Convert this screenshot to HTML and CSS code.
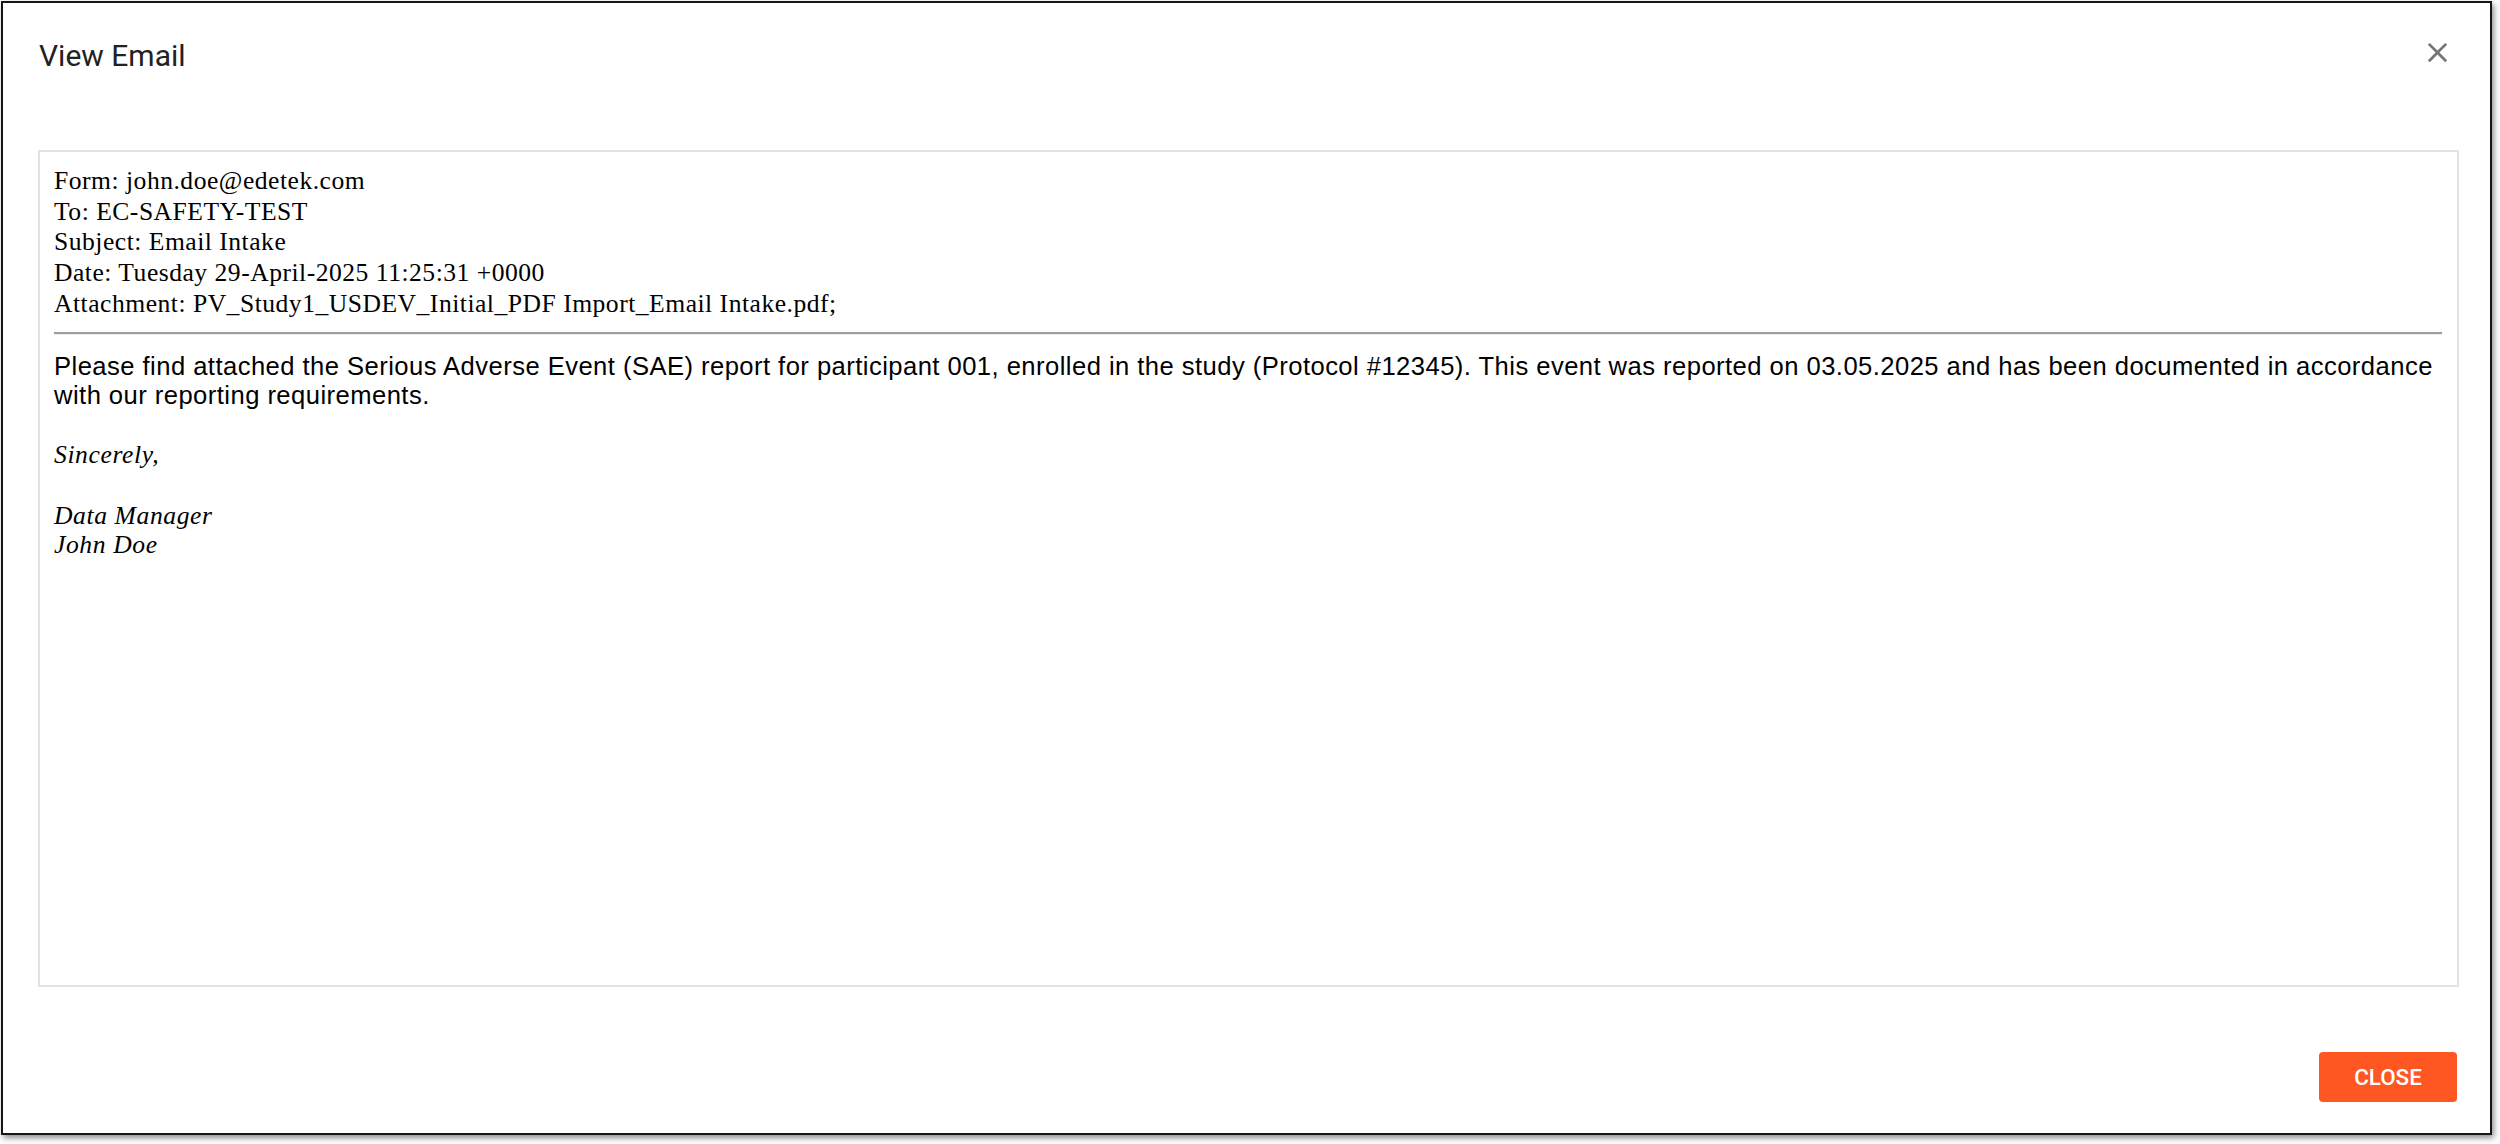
FILE: index.html
```html
<!DOCTYPE html>
<html lang="en">
<head>
<meta charset="utf-8">
<title>View Email</title>
<link rel="stylesheet" href="styles.css">
</head>
<body>
<div class="dialog">
  <div class="dialog-header">
    <h1 class="dialog-title">View Email</h1>
    <button class="icon-btn" aria-label="Close">
      <svg viewBox="0 0 24 24" width="33" height="33"><path fill="#757575" d="M19 6.41L17.59 5 12 10.59 6.41 5 5 6.41 10.59 12 5 17.59 6.41 19 12 13.41 17.59 19 19 17.59 13.41 12z"/></svg>
    </button>
  </div>
  <div class="email-box">
    <div class="email-meta">
      <div>Form: john.doe@edetek.com</div>
      <div>To: EC-SAFETY-TEST</div>
      <div>Subject: Email Intake</div>
      <div>Date: Tuesday 29-April-2025 11:25:31 +0000</div>
      <div>Attachment: PV_Study1_USDEV_Initial_PDF Import_Email Intake.pdf;</div>
    </div>
    <hr class="divider">
    <p class="email-text">Please find attached the Serious Adverse Event (SAE) report for participant 001, enrolled in the study (Protocol #12345). This event was reported on 03.05.2025 and has been documented in accordance with our reporting requirements.</p>
    <p class="sign">Sincerely,</p>
    <p class="sign sign-name">Data Manager<br>John Doe</p>
  </div>
  <div class="dialog-footer">
    <button class="close-btn">CLOSE</button>
  </div>
</div>
</body>
</html>
```
FILE: styles.css
```css
html, body {
  margin: 0;
  padding: 0;
  background: #ffffff;
}
body {
  width: 2500px;
  height: 1144px;
  overflow: hidden;
}
.dialog {
  box-sizing: border-box;
  margin: 1px 0 0 1px;
  width: 2491px;
  height: 1134px;
  border: 2px solid #161616;
  box-shadow: 2px 3px 6px rgba(0, 0, 0, 0.45);
  background: #ffffff;
  display: flex;
  flex-direction: column;
}
.dialog-header {
  display: flex;
  justify-content: space-between;
  align-items: flex-start;
  padding: 35px 36px 0 36px;
  height: 147px;
  box-sizing: border-box;
  flex: none;
}
.dialog-title {
  margin: 0;
  font-family: Roboto, "Liberation Sans", sans-serif;
  font-weight: 400;
  font-size: 30px;
  line-height: 35px;
  color: #222222;
}
.icon-btn {
  border: 0;
  padding: 0;
  margin: -2px 0 0 0;
  background: transparent;
  width: 33px;
  height: 33px;
  display: flex;
}
.email-box {
  box-sizing: border-box;
  margin: 0 31px 0 35px;
  height: 837px;
  flex: none;
  border: 2px solid #e2e2e2;
  padding: 14px 15px 14px 14px;
}
.email-meta {
  font-family: "Liberation Serif", "Times New Roman", serif;
  font-size: 25.6px;
  line-height: 30.7px;
  letter-spacing: 0.5px;
  color: #000000;
}
.divider {
  margin: 12px 0 0 0;
  height: 0;
  border: 0;
  border-top: 2px solid #9d9d9d;
  border-bottom: 1px solid #ececec;
}
.email-text {
  margin: 17px 0 0 0;
  font-family: "Liberation Sans", Arial, sans-serif;
  font-size: 25.6px;
  line-height: 29px;
  letter-spacing: 0.45px;
  color: #000000;
}
.sign {
  margin: 30px 0 0 0;
  font-family: "Liberation Serif", "Times New Roman", serif;
  font-style: italic;
  font-size: 25.6px;
  line-height: 29px;
  letter-spacing: 0.6px;
  color: #000000;
}
.sign-name {
  margin-top: 32px;
}
.dialog-footer {
  display: flex;
  justify-content: flex-end;
  padding: 65px 33px 0 0;
}
.close-btn {
  width: 138px;
  height: 50px;
  border: 0;
  border-radius: 4px;
  background: #ff5722;
  color: #ffffff;
  font-family: Roboto, "Liberation Sans", sans-serif;
  font-weight: 500;
  font-size: 22.4px;
  padding: 0;
}
```
